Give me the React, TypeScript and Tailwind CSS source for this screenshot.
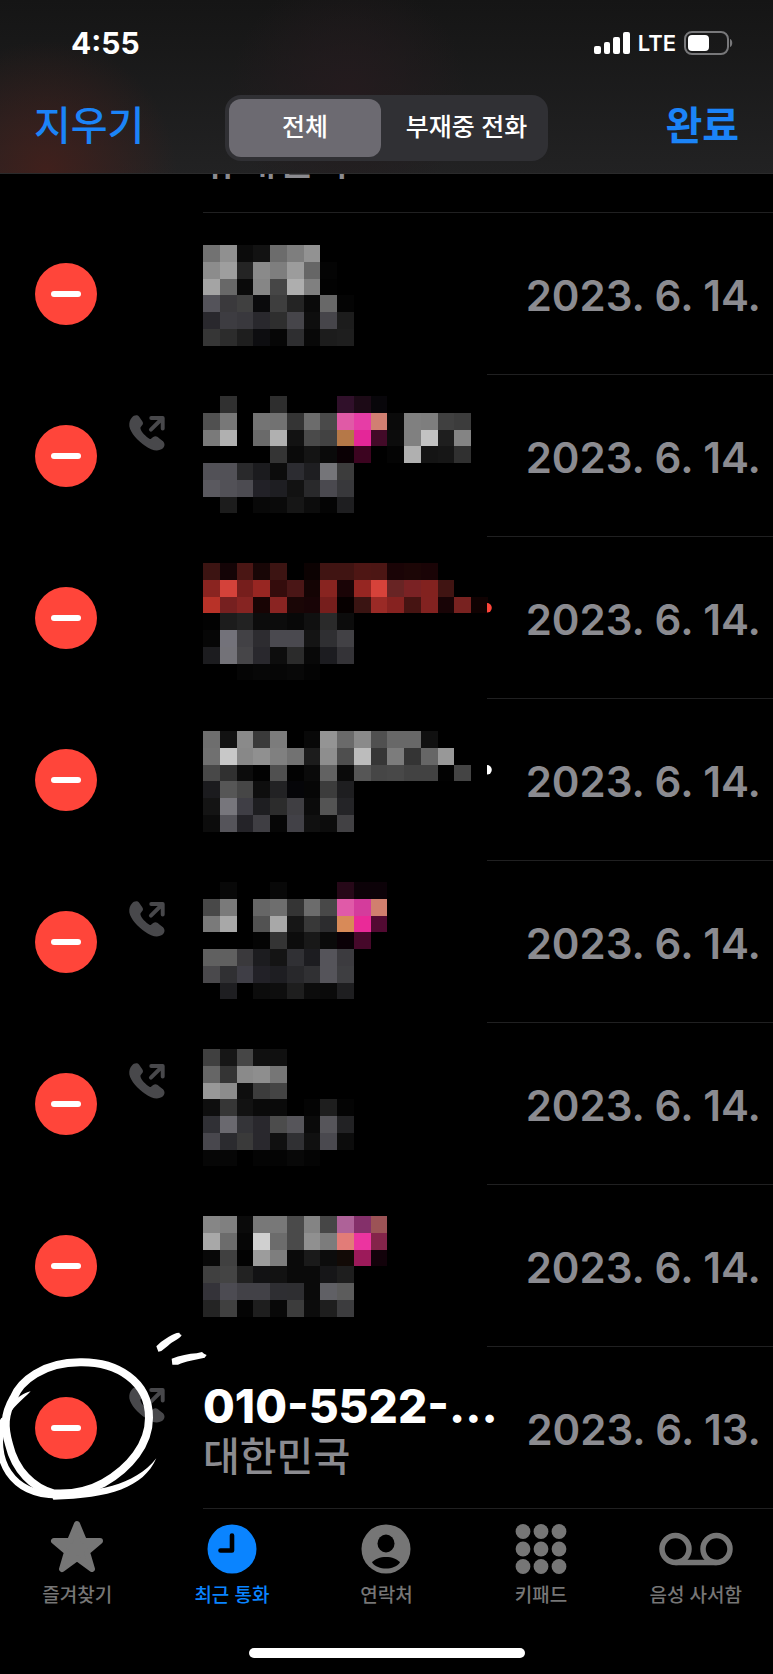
import { Fragment } from 'react';

type Call = {
  id: number;
  date: string;
  outgoing?: boolean;
  name?: string;
  region?: string;
  // masked callers: y offset of the mosaic and one string per line of cells
  top?: number;
  cells?: string[];
  dot?: string;
};

const calls: Call[] = [
  {
    id: 1,
    date: '2023. 6. 14.',
    top: 32,
    cells: [
      '72 90 0b 12 6c 7e 92',
      '8c 9e 24 8a 7e 9c 66 04',
      'a4 68 0a 86 46 ae 80 02',
      '54535a 3a393c 40 0a0a0c 3e 24 0a 68 04',
      '29282d 3d3c41 39383d 29282d 2e 46454a 0e 46454a 1c',
      '36 2c 1e 0d0d10 06 2e2e30 08 1c 1e',
    ],
  },
  {
    id: 2,
    date: '2023. 6. 14.',
    outgoing: true,
    top: 21,
    cells: [
      '. 30 . . 2e . . . 30102a 1c0a16 08060a',
      '50 78 . 74 72 34 6c 4a e05aa6 e63da6 d17f72 0a 80 7e 40 3c',
      '7a b0 . 6a b0 12 4a 42 b57848 e42698 420a28 0c 80 c2 1e 84',
      '. . . . 34 0a 14 0a 0a0004 3c0420 . 04 b0 14 16 30',
      '525157 525157 29292b 1b1b1e 0c 2c2c31 1e1e21 757579 3c',
      '5a595f 525157 4c4b51 222127 1e1e22 12 29292b 4a494f 38383b',
      '. 1c . 08 0a 16 0c 04 1e1e20',
    ],
  },
  {
    id: 3,
    date: '2023. 6. 14.',
    top: 26,
    dot: '#ff453a',
    cells: [
      '3c1412 140406 4a1614 180606 3c1412 . 0c0202 401412 401412 4e1614 4c1614 1a0406 1c0606 1a0406',
      '8a2420 d4423a 761e1c 982622 340c0c 4a1616 140404 882420 1a0406 962622 d6423a 682424 7a2224 82221f 401412',
      'b83228 762020 862422 180404 8a2422 1a0606 180406 761e1c 060000 3a1412 9a2a26 862220 461412 822220 180406 782220 100202',
      '02 1c 22 0c 0c 08 10 2a 0c',
      '06 73727a 424145 2d2c30 4a494f 4a494f 14 2f2f32 424145',
      '1c1c1f 737278 464548 29282d 0d 2b 08 1c1c20 343337',
      '. . 05 07 06 08 04',
    ],
  },
  {
    id: 4,
    date: '2023. 6. 14.',
    top: 32,
    dot: '#ffffff',
    cells: [
      '6e 12 8a 3a 7c . 08 94 6a 8a 50 68 68 10',
      '70 c8 88 90 80 72 1c 8e 4e bc 36 7c 34 66 98',
      '48 30 0c 02 50 02 0a 62 0a 56 46 48 42 42 02 44',
      '1b1b1e 56 46 0e 222224 050508 06 3c 1e1e20',
      '14 77767c 3f3e45 1e1e21 2c 3f3e42 0b 54 242427',
      '0c 55545a 242328 3f3e43 06 424147 10 0c 424144',
    ],
  },
  {
    id: 5,
    date: '2023. 6. 14.',
    outgoing: true,
    top: 21,
    cells: [
      '. 08 . . 08 . . . 260818 0c0208 0c0208',
      '48 7a . 66 6e 34 6c 48 e05aa8 d43c9c d17f6e',
      '7a a8 . 52 a8 16 38 2c2c2e d88a58 ea2a98 520a32',
      '. . . 04 34 0c 18 0a 0a0006 46082a',
      '60 60 3a393c 1c1c1f 14 303034 1c1c20 55545a 3c3b3f',
      '4a494c 303033 3f3e46 222127 1e1e22 28282b 303033 55545a 3e3e41',
      '. 1e1e21 . 0c 0e 1e 0c 0a 1e1e20',
    ],
  },
  {
    id: 6,
    date: '2023. 6. 14.',
    outgoing: true,
    top: 26,
    cells: [
      '40 16 46 10 10',
      '66 34 8a 8e 76',
      '98 8c 0e 3c 44',
      '0e 36 12 0a 0a . 04 1e 04',
      '303035 6a696f 343438 29282d 4c 56555a 0a 56555a 222224',
      '48474d 2b2b2f 3a 29282d 10 303033 10 4a494f 0c',
      '06 06 . 04 04 08 04',
    ],
  },
  {
    id: 7,
    date: '2023. 6. 14.',
    top: 31,
    cells: [
      '86 80 0a 78 78 4a 84 46 ae6298 84306a 9c5356',
      'a8 6c 06 d0 6c 4a 90 7c e27c78 ec34a0 84244a',
      '08 40 02 9c 7e 0a 1a 0c 120a06 9c1a5a 12020a',
      '40 44 22 121214 12 0a 0a 161618 1e',
      '343339 4c4b52 424147 424147 2e2e32 2e2e31 0a 606065 5c',
      '24 40 04 1e 08 3c 0c 1e 3c3c3e',
    ],
  },
  {
    id: 8,
    date: '2023. 6. 13.',
    outgoing: true,
    name: '010-5522-...',
    region: '대한민국',
  },
];

const CELL = 16.75;

// two digits are a grey, six digits a full colour
const toColor = (value: string) => (value.length === 2 ? `#${value}${value}${value}` : `#${value}`);

function Mosaic({ call }: { call: Call }) {
  return (
    <svg className="block h-[162px] w-[288px] overflow-visible" viewBox="0 0 288 162" aria-hidden="true">
      <g transform={`translate(0 ${call.top})`} shapeRendering="crispEdges">
        {call.cells?.map((line, y) => (
          <Fragment key={y}>
            {line.split(' ').map((value, x) =>
              value === '.' ? null : (
                <rect key={x} x={x * CELL} y={y * CELL} width={CELL} height={CELL} fill={toColor(value)} />
              )
            )}
          </Fragment>
        ))}
      </g>
      {call.dot && <path d="M284 66a4.800 4.800 0 0 1 0 9.600z" fill={call.dot} />}
    </svg>
  );
}

function OutgoingIcon() {
  return (
    <svg className="size-9 overflow-visible" viewBox="0 0 108 110" aria-hidden="true">
      <path
        d="M8 8C14 0 24-2 30 5L40 20C45 28 38 32 34 38C32 46 46 62 58 70C62 74 64 75 68 71L73 67C80 62 86 66 90 70L103 80C112 90 106 100 98 105C86 112 66 108 48 94C26 78 4 56 0 34C-1 24 2 14 8 8Z"
        fill="#48484b"
      />
      <path d="M66 45L98 13M67 9H102V41" fill="none" stroke="#48484b" strokeWidth="12" strokeLinecap="round" strokeLinejoin="round" />
    </svg>
  );
}

function Scribble() {
  return (
    <svg className="pointer-events-none absolute left-0 -top-[26px] h-[190px] w-[260px]" viewBox="0 0 780 570" aria-hidden="true">
      <g fill="none" stroke="#fff" strokeLinecap="round">
        <path
          d="M40 232C60 180 130 124 240 124C350 122 447 180 447 290C447 370 390 440 310 486C260 514 210 520 160 517C100 500 46 450 27 370C12 320 12 280 40 232Z"
          strokeWidth="24"
        />
        <path d="M10 300C-8 350 -4 410 26 455C60 505 120 530 210 520" strokeWidth="20" />
      </g>
      <path d="M92 211C68 236 34 262 22 290L6 300C14 262 50 222 92 211Z" fill="#fff" />
      <path d="M150 514C270 516 400 500 469 412C430 500 330 532 160 536Z" fill="#fff" />
      <path d="M469 76C486 58 510 44 530 36L538 35L540 40L545 42C540 54 516 62 504 74L484 90L475 92L472 84Z" fill="#fff" />
      <path d="M515 113C540 104 566 98 590 97L606 93L612 98L620 102L614 110C586 116 556 120 534 131L517 131Z" fill="#fff" />
    </svg>
  );
}

function CallRow({ call }: { call: Call }) {
  return (
    <li className="relative flex h-[162px]">
      <div className="flex w-[129px] shrink-0 items-center pl-[35px]">
        <button
          type="button"
          aria-label="삭제"
          className="flex size-[62px] items-center justify-center rounded-full bg-[#ff453a]"
        >
          <span className="h-[6px] w-[30px] rounded-full bg-white" />
        </button>
      </div>
      <div className="w-[74px] shrink-0 pt-10">{call.outgoing && <OutgoingIcon />}</div>
      {call.name ? (
        <div className="flex w-[284px] shrink-0 flex-col justify-end border-b border-[#202021] pb-[26px] whitespace-nowrap">
          <p className="text-[46px] leading-[51px] font-extrabold text-white">{call.name}</p>
          <p className="text-[40px] leading-[50px] font-medium text-[#8b8b90]">{call.region}</p>
        </div>
      ) : (
        <div className="w-[284px] shrink-0">
          <Mosaic call={call} />
        </div>
      )}
      <div className="flex flex-1 items-center justify-end border-b border-[#202021] pt-1 pr-3">
        <time className="text-[42px] font-semibold whitespace-nowrap text-[#8b8b90]">{call.date}</time>
      </div>
      {call.name && <Scribble />}
    </li>
  );
}

function StatusBar() {
  return (
    <div className="flex h-[86px] items-center justify-between pr-10 pl-[71px] text-white">
      <span className="text-[30px] font-bold">4:55</span>
      <div className="flex items-center gap-2">
        <svg className="h-[22px] w-[36px]" viewBox="0 0 36 22" fill="#fff" aria-hidden="true">
          <rect x="0" y="14" width="7" height="8" rx="2" />
          <rect x="10" y="10" width="6" height="12" rx="2" />
          <rect x="19" y="5" width="7" height="17" rx="2" />
          <rect x="29" y="0" width="7" height="22" rx="2" />
        </svg>
        <span className="text-[22px] font-semibold">LTE</span>
        <svg className="h-[24px] w-[49px]" viewBox="0 0 49 24" aria-hidden="true">
          <rect x="1" y="1" width="43" height="22" rx="7" fill="none" stroke="#78787a" strokeWidth="2" />
          <rect x="4" y="4" width="21" height="16" rx="4" fill="#fff" />
          <path d="M46 8c3 1 3 7 0 8z" fill="#78787a" />
        </svg>
      </div>
    </div>
  );
}

const tabs = [
  {
    label: '즐겨찾기',
    icon: (
      <path
        d="M27 4L34 21H50L37 32L42 49L27 38L12 49L17 32L4 21H20Z"
        fill="currentColor"
        stroke="currentColor"
        strokeWidth="6"
        strokeLinejoin="round"
      />
    ),
  },
  {
    label: '최근 통화',
    active: true,
    icon: (
      <>
        <circle cx="27" cy="29" r="24.500" fill="currentColor" />
        <path d="M27 15.500V30.500H15.500" fill="none" stroke="#000" strokeWidth="4.600" strokeLinecap="round" strokeLinejoin="round" />
      </>
    ),
  },
  {
    label: '연락처',
    icon: (
      <>
        <circle cx="27" cy="29" r="24.500" fill="currentColor" />
        <ellipse cx="27" cy="23.500" rx="8.500" ry="9" fill="#000" />
        <path d="M13 42.500C18 35 36 35 41 42.500C35 50.500 19 50.500 13 42.500Z" fill="#000" />
      </>
    ),
  },
  {
    label: '키패드',
    icon: [11.5, 29, 46.5].map(y =>
      [9, 27, 45].map(x => <circle key={`${x}-${y}`} cx={x} cy={y} r="7.400" fill="currentColor" />)
    ),
  },
  {
    label: '음성 사서함',
    icon: (
      <g fill="none" stroke="currentColor" strokeWidth="5.500">
        <circle cx="6.500" cy="29" r="13.500" />
        <circle cx="47.500" cy="29" r="13.500" />
        <path d="M6.500 42.500H47.500" />
      </g>
    ),
  },
];

export default function App() {
  return (
    <div className="min-h-screen overflow-x-hidden bg-black font-[Inter,'Noto_Sans_CJK_KR',sans-serif]">
      <header className="bg-[radial-gradient(circle_at_6%_98%,#40201c_0%,transparent_130px),radial-gradient(circle_at_45%_55%,#241b1e_0%,transparent_120px),linear-gradient(#151515,#222223)]">
        <StatusBar />
        <div className="grid h-[88px] grid-cols-[1fr_323px_1fr] items-center border-b border-[#2a2a2b] px-[34px] pb-[4px]">
          <button type="button" className="-mt-1 justify-self-start text-[40px] leading-none font-medium text-[#1b84f8]">
            지우기
          </button>
          <div className="grid h-[66px] grid-cols-[152px_1fr] rounded-2xl bg-[#303034] p-1 text-[25px] font-medium text-white">
            <button type="button" aria-pressed="true" className="rounded-xl bg-[#6c6a71]">
              전체
            </button>
            <button type="button" aria-pressed="false" className="pl-2">
              부재중 전화
            </button>
          </div>
          <button type="button" className="-mt-1 justify-self-end text-[40px] leading-none font-bold text-[#1b84f8]">
            완료
          </button>
        </div>
      </header>

      <main>
        {/* bottom of the row that is scrolled under the header */}
        <div className="flex h-[39px] flex-col justify-end overflow-hidden pl-[203px]">
          <p className="border-b border-[#202021] pb-[31px] text-[40px] leading-[40px] font-medium text-[#8b8b90]">휴대전화</p>
        </div>
        <ul>
          {calls.map(call => (
            <CallRow key={call.id} call={call} />
          ))}
        </ul>
      </main>

      <footer className="flex h-[165px] flex-col items-center justify-between pt-[11px] pb-4">
        <nav className="grid w-full grid-cols-5">
          {tabs.map(tab => (
            <a
              key={tab.label}
              href="#"
              className={`flex flex-col items-center gap-[10px] ${tab.active ? 'text-[#0a84ff]' : 'text-[#767676]'}`}
            >
              <svg className="size-[54px] overflow-visible" viewBox="0 0 54 54" aria-hidden="true">
                {tab.icon}
              </svg>
              <span className="text-[19px] leading-6 font-medium whitespace-nowrap">{tab.label}</span>
            </a>
          ))}
        </nav>
        <div className="h-[10px] w-[276px] rounded-full bg-white" />
      </footer>
    </div>
  );
}
